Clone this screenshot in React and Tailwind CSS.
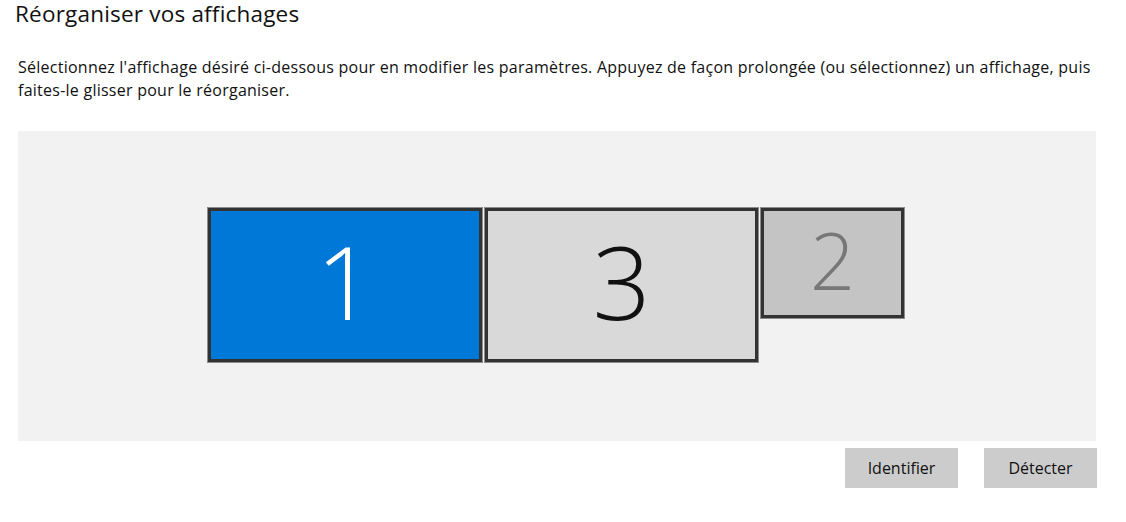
import React from 'react';

const Monitor = ({ n, className, numClass }) => (
  <div className={`flex items-center justify-center border-[3px] border-[#333333] outline outline-1 outline-[#8c8c8c] ${className}`}>
    <span className={`font-light leading-none ${numClass}`}>{n}</span>
  </div>
);

export default function App() {
  return (
    <div className="w-[1126px] h-[522px] bg-white text-black" style={{ fontFamily: '"Open Sans", "Noto Sans", sans-serif' }}>
      <h1 className="pl-[15px] text-[22.5px] leading-[28px] font-normal tracking-[0.2px] text-[#111]">Réorganiser vos affichages</h1>

      <p className="pl-[18px] pt-[28px] text-[16px] leading-[23px] tracking-[0.25px] text-[#111] whitespace-nowrap">
        Sélectionnez l'affichage désiré ci-dessous pour en modifier les paramètres. Appuyez de façon prolongée (ou sélectionnez) un affichage, puis
        <br />
        faites-le glisser pour le réorganiser.
      </p>

      {/* Display arrangement canvas */}
      <div className="ml-[18px] mt-[29px] w-[1078px] h-[310px] bg-[#f2f2f2] pt-[77px] pl-[190px] flex items-start gap-[3px]">
        <Monitor n="1" className="w-[274px] h-[154px] bg-[#0078d7]" numClass="text-[102px] text-white mt-[-9px]" />
        <Monitor n="3" className="w-[273px] h-[154px] bg-[#d9d9d9]" numClass="text-[102px] text-[#111] mt-[-9px]" />
        <Monitor n="2" className="w-[143px] h-[110px] bg-[#c4c4c4]" numClass="text-[79px] text-[#777777] mt-[-8px]" />
      </div>

      <div className="flex justify-end gap-[26px] w-[1097px] mt-[7px]">
        <button className="w-[113px] h-[40px] bg-[#cccccc] text-[16px] text-[#111]">Identifier</button>
        <button className="w-[113px] h-[40px] bg-[#cccccc] text-[16px] text-[#111]">Détecter</button>
      </div>
    </div>
  );
}
